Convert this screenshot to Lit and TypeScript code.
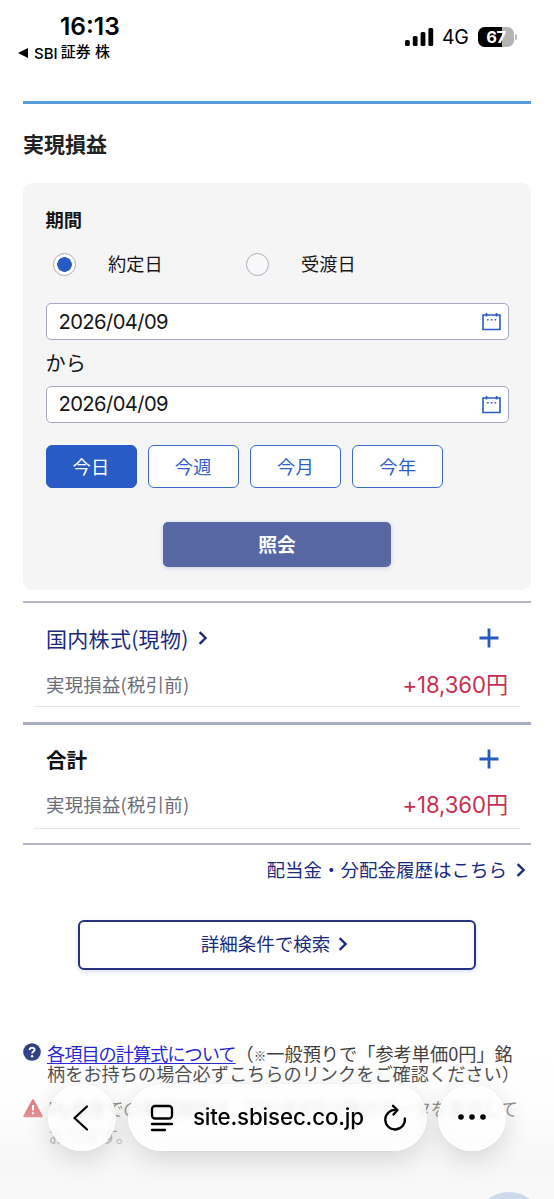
import { LitElement, html, css, svg } from "lit";
import { customElement, property, state } from "lit/decorators.js";
import { classMap } from "lit/directives/class-map.js";

const chevron = html`<svg class="chev" width="10" height="16" viewBox="0 0 10 16"><path d="M1.6 2.2 7.6 8 1.6 13.8" fill="none" stroke="currentColor" stroke-width="2.3"/></svg>`;

@customElement("status-bar")
class StatusBar extends LitElement {
  static styles = css`
    :host { display: flex; justify-content: space-between; height: 100px; box-sizing: border-box; color: #000; font-family: Inter, "Noto Sans CJK JP", sans-serif; }
    .left { display: flex; flex-direction: column; padding: 11px 0 0 18px; }
    .time { font-size: 24.5px; line-height: 30px; font-weight: 600; padding-left: 42px; letter-spacing: 0; }
    .back { display: flex; align-items: center; height: 24px; font-size: 15px; font-weight: 500; white-space: pre; }
    .back svg { margin-right: 6px; }
    .jp { font-size: 15px; line-height: 20px; margin: -2px 0 0 3px; letter-spacing: .1px; }
    .right { display: flex; align-items: center; height: 24px; padding: 25px 38px 0 0; }
    .net { font-size: 19.5px; margin: 0 9px 0 8px; width: 27px; white-space: nowrap; letter-spacing: -0.3px; }
    .battery { width: 36px; height: 20px; border-radius: 6.5px; background: linear-gradient(90deg, #000 67%, #b4b4b4 67%); color: #fff; font-weight: 700; font-size: 16.5px; line-height: 20px; text-align: center; letter-spacing: -0.5px; }
    .nub { width: 2px; height: 6px; margin-left: 1px; background: #b9b9b9; border-radius: 0 2px 2px 0; margin-right: -1px; }
  `;
  render() {
    return html`
      <div class="left">
        <div class="time">16:13</div>
        <div class="back"><svg width="10" height="10" viewBox="0 0 10 10"><path d="M0 5 10 0V10Z"/></svg>SBI<span class="jp">証券 株</span></div>
      </div>
      <div class="right">
        <svg width="29" height="18" viewBox="0 0 29 18">
          ${[6, 10, 14, 18].map((h, i) => svg`<rect x=${i * 7.8} y=${18 - h} width="4.8" height=${h} rx="1.5"/>`)}
        </svg>
        <span class="net">4G</span><span class="battery">67</span><span class="nub"></span>
      </div>`;
  }
}

@customElement("date-field")
class DateField extends LitElement {
  @property() value = "";
  static styles = css`
    :host { display: flex; align-items: center; justify-content: space-between; box-sizing: border-box; height: 37px; padding: 0 7px 0 12px; border: 1.5px solid #a6a9c0; border-radius: 5px; background: #fff; font: 20.2px/34px Inter, sans-serif; letter-spacing: -0.6px; color: #161616; }
  `;
  render() {
    return html`<span>${this.value}</span>
      <svg width="19" height="19" viewBox="0 0 19 19" fill="none" stroke="#2a5bc7" stroke-width="1.6">
        <path d="M1 3H18V17.5H1Z M4.5 1V4.4 M14.5 1V4.4"/><path d="M5 7.8H6.6 M8.8 7.8H10.4 M12.6 7.8H14.2"/>
      </svg>`;
  }
}

@customElement("profit-row")
class ProfitRow extends LitElement {
  @property() heading = "";
  @property() amount = "";
  @property({ type: Boolean }) link = false;
  static styles = css`
    :host { display: block; height: 119px; padding: 0 11px; }
    .inner { height: 104px; border-bottom: 1.5px solid #e5e6ea; padding: 0 12px; box-sizing: border-box; }
    .row { display: flex; justify-content: space-between; align-items: center; }
    .head { height: 70px; padding-right: 9px; }
    :host(:not([link])) { height: 118px; }
    :host(:not([link])) .head { height: 68px; }
    .title { display: flex; align-items: center; font-size: 20.6px; line-height: 26px; font-weight: 700; color: #111; margin-top: -1px; }
    .title.link { color: #1a2a7c; font-size: 21px; font-weight: 400; letter-spacing: 0.3px; }
    .chev { margin-left: 9px; }
    .detail { height: 24px; }
    .label { font-size: 18.4px; line-height: 24px; color: #6c6e75; letter-spacing: 0.25px; margin-top: -2px; }
    .amount { font: 22.2px/24px Inter, "Noto Sans CJK JP", sans-serif; color: #c92f50; letter-spacing: -0.1px; }
  `;
  render() {
    return html`<div class="inner">
      <div class="row head">
        <span class=${classMap({ title: true, link: this.link })}>${this.heading}${this.link ? chevron : ""}</span>
        <svg width="20" height="20" viewBox="0 0 20 20"><path d="M10 .5V19.5M.5 10H19.5" stroke="#265abf" stroke-width="2.8"/></svg>
      </div>
      <div class="row detail"><span class="label">実現損益(税引前)</span><span class="amount">${this.amount}</span></div>
    </div>`;
  }
}

@customElement("browser-bar")
class BrowserBar extends LitElement {
  static styles = css`
    :host { display: flex; justify-content: space-between; align-items: flex-start; box-sizing: border-box; padding: 54px 48px 0; height: 169px; background: linear-gradient(180deg, rgba(255,255,255,0) 0%, rgba(253,253,253,.1) 22%, rgba(250,250,250,.38) 46%, rgba(247,247,247,.62) 63%, rgba(246,246,246,.9) 78%, #f8f8f8 100%); color: #000; }
    .glass { display: flex; align-items: center; justify-content: center; height: 67px; box-sizing: border-box; border: 1.5px solid rgba(255,255,255,.95); background: rgba(254,254,254,.82); backdrop-filter: blur(2.5px); box-shadow: 0 8px 26px rgba(0,0,0,.14), 0 0 3px rgba(0,0,0,.05); }
    .round { width: 68px; border-radius: 50%; }
    .round:first-child svg { margin-right: 3px; }
    .round:last-child svg { margin-top: -2px; }
    .pill { width: 299px; border-radius: 34px; justify-content: space-between; padding: 0 18px 0 21px; }
    .url { font: 500 22.3px/30px Inter, sans-serif; letter-spacing: -0.15px; margin-top: -1px; }
  `;
  render() {
    return html`
      <div class="glass round"><svg width="18" height="28" viewBox="0 0 18 28"><path d="M15 2.5 2.5 14 15 25.5" fill="none" stroke="#000" stroke-width="2.3" stroke-linecap="round" stroke-linejoin="round"/></svg></div>
      <div class="glass pill">
        <svg width="24" height="28" viewBox="0 0 24 28" fill="none" stroke="#000" stroke-width="2.3" stroke-linecap="round"><rect x="2" y="2" width="20" height="12.5" rx="3"/><path d="M2 20H22M2 26H15"/></svg>
        <span class="url">site.sbisec.co.jp</span>
        <svg width="24" height="28" viewBox="0 0 24 28" fill="none" stroke="#000" stroke-width="2.3" stroke-linecap="round" stroke-linejoin="round"><path d="M13.5 6A9.8 9.8 0 1 0 21.8 14.5M10 1.8 14.5 6 10.5 10.6"/></svg>
      </div>
      <div class="glass round"><svg width="28" height="6" viewBox="0 0 28 6"><circle cx="3" cy="3" r="2.8"/><circle cx="14" cy="3" r="2.8"/><circle cx="25" cy="3" r="2.8"/></svg></div>`;
  }
}

@customElement("app-root")
class AppRoot extends LitElement {
  @state() private basis = 0;
  @state() private range = 0;
  static styles = css`
    :host { display: block; position: relative; width: 554px; height: 1199px; overflow: hidden; background: #fff; color: #161616; font-family: "Noto Sans CJK JP", sans-serif; }
    main { padding: 1px 23px 0; }
    .title { margin: 0; border-top: 3px solid #5a9bda; height: 79px; line-height: 79px; font-size: 21px; font-weight: 700; color: #222; }
    .card { height: 407px; box-sizing: border-box; padding: 22px 22.5px 0; border-radius: 9px; background: #f5f5f6; }
    .period { font-size: 18.3px; line-height: 28px; font-weight: 700; }
    .radios { display: grid; grid-template-columns: 193px 1fr; height: 70px; box-sizing: border-box; padding: 18px 0 0 7px; }
    .radio { display: flex; align-items: center; gap: 32.5px; height: 26px; font-size: 18.2px; line-height: 26px; }
    .radio span:last-child { margin-top: -3px; }
    .dot { width: 23px; height: 23px; box-sizing: border-box; border: 1.5px solid #aaacc2; border-radius: 50%; background: #f8f8f8; }
    .dot.on { background: #fff radial-gradient(circle, #275bc4 7px, #fff 7.6px) border-box; }
    .from { height: 45.5px; line-height: 46px; font-size: 20.2px; }
    .ranges { display: flex; gap: 11.3px; margin-top: 22.5px; }
    .range { width: 91px; height: 43px; box-sizing: border-box; border: 1.5px solid #3d6bc8; border-radius: 6px; background: #fff; color: #2e60c5; text-align: center; font-size: 18.3px; line-height: 41px; letter-spacing: .3px; }
    .range.on { background: #285cc4; color: #fff; border-color: #285cc4; }
    .submit { width: 228px; height: 45px; margin: 33.5px auto 0; border-radius: 5px; background: #5667a3; color: #fff; text-align: center; font-size: 18.8px; font-weight: 700; line-height: 43px; box-shadow: 0 1px 4px rgba(60,90,170,.25); }
    .rows { margin-top: 11px; border-top: 2px solid #b5b7c6; border-bottom: 2px solid #b5b7c6; }
    .thick { height: 3px; background: #a8adc4; }
    .history { display: flex; justify-content: flex-end; align-items: center; height: 50px; padding-right: 5px; color: #1a2a7c; font-size: 18.5px; }
    .history span { margin-top: -2px; }
    .history .chev { margin-left: 9px; }
    .search { display: flex; justify-content: center; align-items: center; width: 398px; height: 50px; box-sizing: border-box; margin: 24.5px auto 0; padding-right: 5px; border: 2px solid #26337f; border-radius: 6px; color: #1a2a7c; font-size: 18.5px; box-shadow: 0 2px 4px rgba(70,90,190,.18); }
    .search .chev { margin: -2px 0 0 8px; }
    .search span { margin-top: -4px; }
    .note { display: flex; margin-top: 73.5px; font-size: 18.2px; line-height: 20px; color: #333; white-space: nowrap; }
    .note svg { flex: none; margin: 0 6px 0 0; }
    .note a { color: #1616d0; text-decoration: underline; text-underline-offset: 2px; letter-spacing: -1px; }
    .mark { font-size: 12.5px; line-height: 0; font-weight: 700; }
    .note.warn { margin-top: 15px; line-height: 27px; color: #555; letter-spacing: -0.78px; }
    .note.warn svg { margin: 1px 5px 0 0; }
    .note.warn div { margin-top: -3px; }
    .float { position: absolute; right: 15px; bottom: -43px; width: 60px; height: 50px; border-radius: 50%; background: #ccdaec; z-index: 1; }
    browser-bar { position: absolute; left: 0; right: 0; bottom: 0; }
  `;
  render() {
    return html`
      <status-bar></status-bar>
      <main>
        <h1 class="title">実現損益</h1>
        <section class="card">
          <div class="period">期間</div>
          <div class="radios">
            ${["約定日", "受渡日"].map((t, i) => html`<div class="radio" @click=${() => (this.basis = i)}><span class=${classMap({ dot: true, on: this.basis === i })}></span><span>${t}</span></div>`)}
          </div>
          <date-field value="2026/04/09"></date-field>
          <div class="from">から</div>
          <date-field value="2026/04/09"></date-field>
          <div class="ranges">
            ${["今日", "今週", "今月", "今年"].map((t, i) => html`<div class=${classMap({ range: true, on: this.range === i })} @click=${() => (this.range = i)}>${t}</div>`)}
          </div>
          <div class="submit">照会</div>
        </section>
        <section class="rows">
          <profit-row link heading="国内株式(現物)" amount="+18,360円"></profit-row>
          <div class="thick"></div>
          <profit-row heading="合計" amount="+18,360円"></profit-row>
        </section>
        <div class="history"><span>配当金・分配金履歴はこちら</span>${chevron}</div>
        <div class="search"><span>詳細条件で検索</span>${chevron}</div>
        <div class="note">
          <svg width="18" height="18" viewBox="0 0 18 18"><circle cx="9" cy="9" r="8.8" fill="#24367f"/><path d="M6.6 7.1C6.6 3.8 11.7 4 11.6 6.9 11.5 8.6 9.1 8.6 9.1 10.6" fill="none" stroke="#fff" stroke-width="1.9"/><circle cx="9.1" cy="13.2" r="1.2" fill="#fff"/></svg>
          <div><a>各項目の計算式について</a>（<span class="mark">※</span>一般預りで「参考単価0円」銘<br>柄をお持ちの場合必ずこちらのリンクをご確認ください）</div>
        </div>
        <div class="note warn">
          <svg width="20" height="19" viewBox="0 0 20 19"><path d="M10 1.5 18.5 17H1.5Z" fill="#cf3f45" stroke="#cf3f45" stroke-width="2.4" stroke-linejoin="round"/><path d="M10 6V11.5M10 13.3V15.3" stroke="#fff" stroke-width="2"/></svg>
          <div>My資産での実現損益は、2021年8月以降のデータを表示して<br>おります。</div>
        </div>
      </main>
      <div class="float"></div>
      <browser-bar></browser-bar>`;
  }
}
